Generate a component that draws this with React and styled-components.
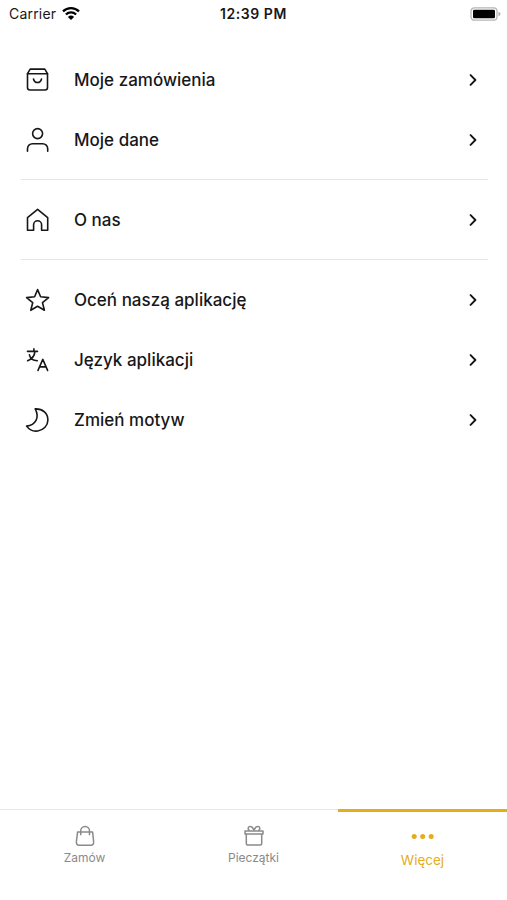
import styled, { createGlobalStyle } from "styled-components";

const GlobalStyle = createGlobalStyle`
  body {
    margin: 0;
    background: #ffffff;
    font-family: Inter, "Liberation Sans", sans-serif;
  }
`;

const OrdersIcon = () => (
  <Icon viewBox="0 0 24 24">
    <path d="M5.2 1.1h14.6l2.7 4.5v13.9a2.5 2.5 0 0 1-2.5 2.5H5a2.5 2.5 0 0 1-2.5-2.5V5.6z" />
    <path d="M2.5 5.8h20M8.5 11c1.1 4.7 6.9 4.7 8 0" />
  </Icon>
);

const UserIcon = () => (
  <Icon viewBox="0 0 24 24">
    <circle cx="12.6" cy="5.6" r="5" />
    <path d="M2.5 23.3v-2.6a5 5 0 0 1 5-5h10.2a5 5 0 0 1 5 5v2.6" />
  </Icon>
);

const HomeIcon = () => (
  <Icon viewBox="0 0 24 24">
    <path d="M12.6 1.4l10.1 8.2v12.6h-6.1v-5.4a4 4 0 0 0-8 0v5.4H2.5V9.6z" />
  </Icon>
);

const StarIcon = () => (
  <Icon viewBox="0 0 24 24">
    <path d="M12.6 1.6l3 7.2 8 .8-6.1 5.1 1.9 7.6-6.8-4.1-6.8 4.1 1.9-7.6L1.6 9.6l8-.8z" />
  </Icon>
);

const LanguageIcon = () => (
  <Icon viewBox="0 0 24 24">
    <path d="M2.5 3.4h10M8.9.9v2.5M9.9 3.4c-.2 4-2.8 7.6-7.3 9.3M4.4 6.9c.9 3.8 3.7 5.8 7.9 5.8" />
    <path d="M13 22.4l4.8-11 4.8 11M14.6 18.9h6.5" />
  </Icon>
);

const MoonIcon = () => (
  <Icon viewBox="0 0 24 24">
    <path d="M10.2.9c4.6 8.6.4 16.4-8.6 17.2 2.9 4 7 5.5 11.2 4.9 5.7-.8 10.1-5.3 10.1-11.1C22.9 5.5 17.9.6 10.2.9z" />
  </Icon>
);

const BagIcon = () => (
  <TabIcon viewBox="0 0 22 24">
    <path d="M3.6 7.9h15l1 9.6c.2 2.4-.6 3.7-2.8 3.7H5.2c-2.2 0-3-1.3-2.8-3.7z" />
    <path d="M6.7 11.3V6.8a4.4 4.4 0 0 1 8.8 0v4.5" />
  </TabIcon>
);

const GiftIcon = () => (
  <TabIcon viewBox="0 0 22 24">
    <path d="M2 7h18v3H2zM3.3 10v9.8q0 1.2 1.2 1.2h13q1.2 0 1.2-1.2V10" />
    <path d="M11 6.5C9.8 3 7.8 1.8 6.2 2.7S5 6 6.8 6.6M11 6.5c1.2-3.5 3.2-4.7 4.8-3.8S17 6 15.2 6.6" />
  </TabIcon>
);

const sections = [
  [
    { label: "Moje zamówienia", icon: OrdersIcon },
    { label: "Moje dane", icon: UserIcon },
  ],
  [{ label: "O nas", icon: HomeIcon }],
  [
    { label: "Oceń naszą aplikację", icon: StarIcon },
    { label: "Język aplikacji", icon: LanguageIcon },
    { label: "Zmień motyw", icon: MoonIcon },
  ],
];

const App = () => {
  return (
    <Screen>
      <GlobalStyle />
      <StatusBar>
        <Carrier>
          Carrier
          <Wifi viewBox="0 0 18 14">
            <path d="M1 4.4a11.5 11.5 0 0 1 16 0M3.9 7.5a7.3 7.3 0 0 1 10.2 0" />
            <path d="M9 13L5.9 9.9a4.5 4.5 0 0 1 6.2 0z" />
          </Wifi>
        </Carrier>
        <Clock>12:39 PM</Clock>
        <Battery viewBox="0 0 31 14">
          <rect x="1" y=".8" width="26" height="12.4" rx="3.4" fill="#fff" stroke="#b5b5b5" strokeWidth="1.3" />
          <rect x="3" y="2.7" width="22" height="8.6" rx="1.4" fill="#000" />
          <path d="M28.5 4.8v4.4q2-.8 2-2.2t-2-2.2z" fill="#aaa" />
        </Battery>
      </StatusBar>
      <Menu>
        {sections.map((items, index) => (
          <Section key={index}>
            {items.map(({ label, icon: ItemIcon }) => (
              <MenuItem key={label}>
                <ItemIcon />
                <Label>{label}</Label>
                <Chevron viewBox="0 0 8 12">
                  <path d="M1.6 1.1l4.8 4.9-4.8 4.9" />
                </Chevron>
              </MenuItem>
            ))}
          </Section>
        ))}
      </Menu>
      <TabBar>
        <Tab>
          <BagIcon />
          <TabLabel>Zamów</TabLabel>
        </Tab>
        <Tab>
          <GiftIcon />
          <TabLabel>Pieczątki</TabLabel>
        </Tab>
        <Tab $active>
          <Dots viewBox="0 0 24 24">
            <circle cx="3.2" cy="12.4" r="2.5" />
            <circle cx="11.7" cy="12.4" r="2.5" />
            <circle cx="20.2" cy="12.4" r="2.5" />
          </Dots>
          <TabLabel $active>Więcej</TabLabel>
        </Tab>
      </TabBar>
    </Screen>
  );
};

export default App;

const Screen = styled.div`
  width: 100%;
  height: 900px;
  display: flex;
  flex-direction: column;
  background: #ffffff;
  color: #17171a;
`;

const StatusBar = styled.div`
  height: 26px;
  padding: 0 6px;
  display: grid;
  grid-template-columns: 1fr auto 1fr;
  align-items: center;
`;

const Carrier = styled.div`
  display: flex;
  align-items: center;
  gap: 6px;
  font-size: 14px;
  letter-spacing: 0.2px;
  line-height: 26px;
  padding: 1px 0 0 3px;
`;

const Wifi = styled.svg`
  width: 18px;
  height: 14px;
  fill: none;
  stroke: #000000;
  stroke-width: 2.3;

  path:last-child {
    fill: #000000;
    stroke: none;
  }
`;

const Clock = styled.div`
  font-size: 14px;
  font-weight: 600;
  letter-spacing: 0.55px;
  line-height: 26px;
  padding-top: 1px;
`;

const Battery = styled.svg`
  width: 31px;
  height: 14px;
  justify-self: end;
`;

const Menu = styled.div`
  flex: 1;
  padding: 24px 19px 0 21px;
`;

const Section = styled.div`
  & + & {
    border-top: 1px solid #e6e6e6;
    margin-top: 9px;
    padding-top: 10px;
  }
`;

const MenuItem = styled.div`
  height: 60px;
  padding: 0 11px 0 4px;
  display: flex;
  align-items: center;
`;

const Icon = styled.svg`
  width: 24px;
  height: 24px;
  flex-shrink: 0;
  overflow: visible;
  fill: none;
  stroke: #17171a;
  stroke-width: 1.6;
  stroke-linejoin: round;
  stroke-linecap: round;
`;

const Label = styled.div`
  flex: 1;
  margin-left: 25px;
  font-size: 17px;
  font-weight: 500;
  letter-spacing: 0.01px;
`;

const Chevron = styled.svg`
  width: 8px;
  height: 12px;
  fill: none;
  stroke: #17171a;
  stroke-width: 1.9;
  stroke-linecap: round;
  stroke-linejoin: round;
`;

const TabBar = styled.div`
  height: 91px;
  display: grid;
  grid-template-columns: repeat(3, 1fr);
`;

const Tab = styled.div`
  display: flex;
  flex-direction: column;
  align-items: center;
  border-top: ${({ $active }) =>
    $active ? "3px solid #e5ac1c" : "1px solid #e6e6e6"};
  padding-top: ${({ $active }) => ($active ? "12px" : "14px")};
  color: ${({ $active }) => ($active ? "#e5ac1c" : "#8a8a8a")};
`;

const TabIcon = styled.svg`
  width: 22px;
  height: 24px;
  fill: none;
  stroke: currentColor;
  stroke-width: 1.5;
  stroke-linejoin: round;
`;

const Dots = styled.svg`
  width: 24px;
  height: 24px;
  fill: currentColor;
`;

const TabLabel = styled.div`
  font-size: ${({ $active }) => ($active ? "13.5px" : "12px")};
  line-height: 18px;
  margin-top: ${({ $active }) => ($active ? "3px" : "1px")};
`;
